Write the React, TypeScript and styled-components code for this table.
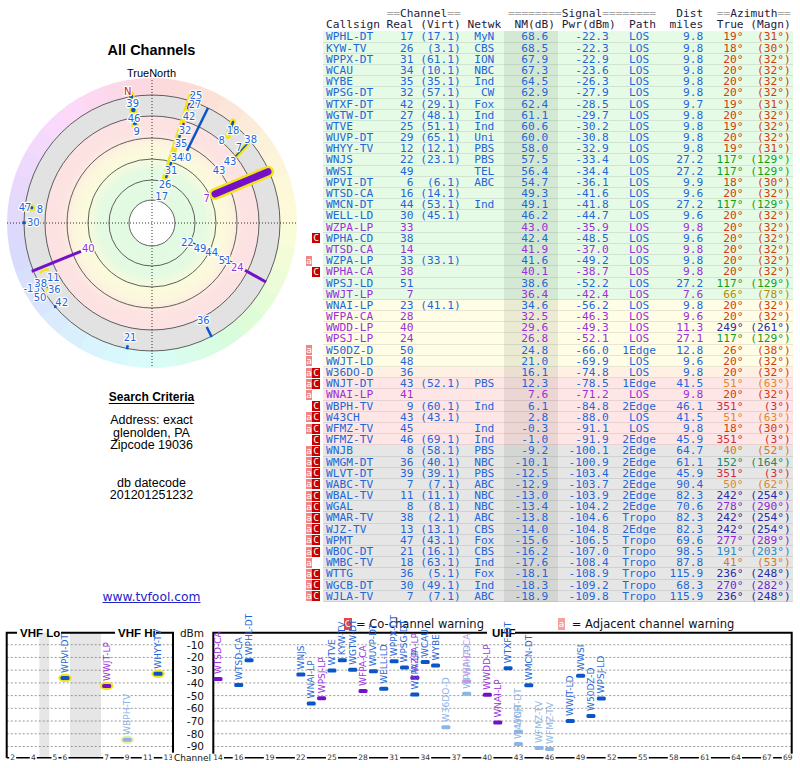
import styled, { createGlobalStyle } from "styled-components";

const GlobalStyle = createGlobalStyle`
  html, body {
    margin: 0;
    padding: 0;
    background: #fff;
  }
  body {
    font-family: "Liberation Sans", Arial, sans-serif;
    color: #000;
  }
`;

const Page = styled.div`
  width: 800px;
  height: 768px;
  overflow: hidden;
`;

const Top = styled.div`
  display: flex;
  height: 610px;
`;

/* ---------- left column ---------- */

const Side = styled.aside`
  width: 303px;
  height: 610px;
  box-sizing: border-box;
  padding-bottom: 5px;
  display: flex;
  flex-direction: column;
  align-items: center;
`;

const Title = styled.h1`
  margin: 41px 0 0;
  font-size: 14.5px;
  line-height: 18px;
  font-weight: bold;
`;

const North = styled.div`
  margin-top: 8px;
  font-size: 11px;
  line-height: 12px;
`;

const Polar = styled.svg`
  display: block;
  flex: none;
  margin-top: -3px;
`;

const CriteriaHead = styled.h2`
  margin: 20px 0 0;
  font-size: 12px;
  line-height: 14px;
  font-weight: bold;
  text-decoration: underline;
  text-decoration-thickness: 1px;
  text-underline-offset: 2px;
`;

const Info = styled.p<{ $gap: number }>`
  margin: ${(p) => p.$gap}px 0 0;
  font-size: 12.5px;
  line-height: 12.5px;
  text-align: center;
`;

const Site = styled.a`
  margin-top: auto;
  font-family: "DejaVu Sans", Verdana, sans-serif;
  font-size: 12.3px;
  line-height: 15px;
  color: #2323c8;
  text-decoration: underline;
`;

const PolarNum = styled.text<{ $c?: string }>`
  font-family: "DejaVu Sans", sans-serif;
  font-size: 10px;
  fill: ${(p) => p.$c ?? "#1f66d8"};
  stroke: #fff;
  stroke-width: 2.4px;
  paint-order: stroke;
  stroke-linejoin: round;
  text-anchor: middle;
  dominant-baseline: central;
`;

/* ---------- report table ---------- */

const Report = styled.section`
  width: 497px;
  padding-top: 8px;
  font-family: "DejaVu Sans Mono", "Liberation Mono", monospace;
  font-size: 11.2px;
  line-height: 11.2px;
`;

const HeadLine = styled.div`
  height: 11.2px;
  padding-left: 23px;
  white-space: pre;
  color: #1c1c3c;
`;

const Rule = styled.span`
  color: #a8a8a8;
`;

const Body = styled.div`
  margin-top: 1px;
`;

const RowWrap = styled.div`
  display: flex;
  height: 11.2px;
`;

const Flags = styled.div`
  width: 20px;
  box-sizing: border-box;
  padding-left: 3px;
  display: flex;
  align-items: center;
`;

const FlagBox = styled.span<{ $kind: "a" | "C" | "" }>`
  width: ${(p) => (p.$kind === "C" ? 8 : 6)}px;
  height: 10px;
  background: ${(p) => (p.$kind === "a" ? "#f08686" : p.$kind === "C" ? "#c80000" : "transparent")};
  color: #fff;
  font-size: 9.5px;
  line-height: 10px;
  text-align: center;
  overflow: hidden;
`;

type Band = "g" | "y" | "o" | "p" | "k";

const bandBg: Record<Band, string> = {
  g: "#e6fbe6",
  y: "#fffde6",
  o: "#fff0e4",
  p: "#ffe6e6",
  k: "#e6e6e6",
};

const Line = styled.div<{ $band: Band; $lp: boolean }>`
  width: 470px;
  box-sizing: border-box;
  padding-left: 3px;
  display: grid;
  grid-template-columns: 9ch 4ch 7ch 6.5ch 8ch 7.5ch 7ch 7ch 6ch 7ch;
  background: ${(p) => bandBg[p.$band]};
  box-shadow: inset 0 -1px 0 rgba(0, 0, 0, 0.09);
  color: ${(p) => (p.$lp ? "#9a30d8" : "#1f66d8")};
  white-space: pre;
`;

const Cell = styled.span<{ $right?: boolean }>`
  text-align: ${(p) => (p.$right ? "right" : "left")};
  overflow: visible;
`;

const NetCell = styled(Cell)`
  padding-right: 1.5ch;
`;

const NmCell = styled(Cell)`
  padding-right: 1.5ch;
  background: rgba(0, 30, 0, 0.08);
`;

const Az = styled.span<{ $c: string }>`
  text-align: right;
  color: ${(p) => p.$c};
`;

/* ---------- spectrum chart ---------- */

const Plot = styled.svg`
  display: block;
`;

const GridLine = styled.line`
  stroke: #808080;
  stroke-width: 0.8;
  stroke-dasharray: 2 2;
`;

const Frame = styled.path`
  fill: none;
  stroke: #000;
  stroke-width: 2;
`;

const PanelTitle = styled.text`
  font-family: "Liberation Sans", Arial, sans-serif;
  font-weight: bold;
  font-size: 11.5px;
  dominant-baseline: central;
`;

const AxisText = styled.text`
  font-family: "DejaVu Sans", sans-serif;
  font-size: 10.5px;
  fill: #111;
  text-anchor: end;
  dominant-baseline: central;
`;

const TickText = styled.text`
  font-family: "DejaVu Sans", sans-serif;
  font-size: 7.5px;
  fill: #333;
  text-anchor: middle;
  dominant-baseline: central;
`;

const LegendText = styled.text`
  font-family: "DejaVu Sans", sans-serif;
  font-size: 11.5px;
  fill: #111;
  dominant-baseline: central;
`;

const StationLabel = styled.text<{ $c: string }>`
  font-family: "DejaVu Sans", sans-serif;
  font-size: 9px;
  fill: ${(p) => p.$c};
  dominant-baseline: central;
`;

/* ---------- data ---------- */

type Row = [string, string, string, string, string, string, string, string, string, number, number, Band, number?];

const rows: Row[] = [
  ["", "WPHL-DT", "17", "(17.1)", "MyN", "68.6", "-22.3", "LOS", "9.8", 19, 31, "g"],
  ["", "KYW-TV", "26", "(3.1)", "CBS", "68.5", "-22.3", "LOS", "9.8", 18, 30, "g"],
  ["", "WPPX-DT", "31", "(61.1)", "ION", "67.9", "-22.9", "LOS", "9.8", 20, 32, "g"],
  ["", "WCAU", "34", "(10.1)", "NBC", "67.3", "-23.6", "LOS", "9.8", 20, 32, "g"],
  ["", "WYBE", "35", "(35.1)", "Ind", "64.5", "-26.3", "LOS", "9.8", 20, 32, "g"],
  ["", "WPSG-DT", "32", "(57.1)", "CW", "62.9", "-27.9", "LOS", "9.8", 20, 32, "g"],
  ["", "WTXF-DT", "42", "(29.1)", "Fox", "62.4", "-28.5", "LOS", "9.7", 19, 31, "g"],
  ["", "WGTW-DT", "27", "(48.1)", "Ind", "61.1", "-29.7", "LOS", "9.8", 20, 32, "g"],
  ["", "WTVE", "25", "(51.1)", "Ind", "60.6", "-30.2", "LOS", "9.8", 19, 32, "g"],
  ["", "WUVP-DT", "29", "(65.1)", "Uni", "60.0", "-30.8", "LOS", "9.8", 20, 32, "g"],
  ["", "WHYY-TV", "12", "(12.1)", "PBS", "58.0", "-32.9", "LOS", "9.8", 19, 31, "g"],
  ["", "WNJS", "22", "(23.1)", "PBS", "57.5", "-33.4", "LOS", "27.2", 117, 129, "g"],
  ["", "WWSI", "49", "", "TEL", "56.4", "-34.4", "LOS", "27.2", 117, 129, "g"],
  ["", "WPVI-DT", "6", "(6.1)", "ABC", "54.7", "-36.1", "LOS", "9.9", 18, 30, "g"],
  ["", "WTSD-CA", "16", "(14.1)", "", "49.3", "-41.6", "LOS", "9.6", 20, 32, "g"],
  ["", "WMCN-DT", "44", "(53.1)", "Ind", "49.1", "-41.8", "LOS", "27.2", 117, 129, "g"],
  ["", "WELL-LD", "30", "(45.1)", "", "46.2", "-44.7", "LOS", "9.6", 20, 32, "g"],
  ["", "WZPA-LP", "33", "", "", "43.0", "-35.9", "LOS", "9.8", 20, 32, "g", 1],
  ["C", "WPHA-CD", "38", "", "", "42.4", "-48.5", "LOS", "9.6", 20, 32, "g"],
  ["", "WTSD-CA", "14", "", "", "41.9", "-37.0", "LOS", "9.8", 20, 32, "g", 1],
  ["a", "WZPA-LP", "33", "(33.1)", "", "41.6", "-49.2", "LOS", "9.8", 20, 32, "g"],
  ["C", "WPHA-CA", "38", "", "", "40.1", "-38.7", "LOS", "9.8", 20, 32, "g", 1],
  ["", "WPSJ-LD", "51", "", "", "38.6", "-52.2", "LOS", "27.2", 117, 129, "g"],
  ["", "WWJT-LP", "7", "", "", "36.4", "-42.4", "LOS", "7.6", 66, 78, "g", 1],
  ["", "WNAI-LP", "23", "(41.1)", "", "34.6", "-56.2", "LOS", "9.8", 20, 32, "y"],
  ["", "WFPA-CA", "28", "", "", "32.5", "-46.3", "LOS", "9.6", 20, 32, "y", 1],
  ["", "WWDD-LP", "40", "", "", "29.6", "-49.3", "LOS", "11.3", 249, 261, "y", 1],
  ["", "WPSJ-LP", "24", "", "", "26.8", "-52.1", "LOS", "27.1", 117, 129, "y", 1],
  ["a", "W50DZ-D", "50", "", "", "24.8", "-66.0", "1Edge", "12.8", 26, 38, "y"],
  ["a", "WWJT-LD", "48", "", "", "21.0", "-69.9", "LOS", "9.6", 20, 32, "y"],
  ["aC", "W36DO-D", "36", "", "", "16.1", "-74.8", "LOS", "9.8", 20, 32, "o"],
  ["aC", "WNJT-DT", "43", "(52.1)", "PBS", "12.3", "-78.5", "1Edge", "41.5", 51, 63, "p"],
  ["a", "WNAI-LP", "41", "", "", "7.6", "-71.2", "LOS", "9.8", 20, 32, "p", 1],
  ["C", "WBPH-TV", "9", "(60.1)", "Ind", "6.1", "-84.8", "2Edge", "46.1", 351, 3, "p"],
  ["aC", "W43CH", "43", "(43.1)", "", "2.8", "-88.0", "LOS", "41.5", 51, 63, "p"],
  ["aC", "WFMZ-TV", "45", "", "Ind", "-0.3", "-91.1", "LOS", "9.8", 18, 30, "p"],
  ["C", "WFMZ-TV", "46", "(69.1)", "Ind", "-1.0", "-91.9", "2Edge", "45.9", 351, 3, "p"],
  ["aC", "WNJB", "8", "(58.1)", "PBS", "-9.2", "-100.1", "2Edge", "64.7", 40, 52, "k"],
  ["aC", "WMGM-DT", "36", "(40.1)", "NBC", "-10.1", "-100.9", "2Edge", "61.1", 152, 164, "k"],
  ["aC", "WLVT-DT", "39", "(39.1)", "PBS", "-12.5", "-103.4", "2Edge", "45.9", 351, 3, "k"],
  ["aC", "WABC-TV", "7", "(7.1)", "ABC", "-12.9", "-103.7", "2Edge", "90.4", 50, 62, "k"],
  ["aC", "WBAL-TV", "11", "(11.1)", "NBC", "-13.0", "-103.9", "2Edge", "82.3", 242, 254, "k"],
  ["aC", "WGAL", "8", "(8.1)", "NBC", "-13.4", "-104.2", "2Edge", "70.6", 278, 290, "k"],
  ["aC", "WMAR-TV", "38", "(2.1)", "ABC", "-13.8", "-104.6", "Tropo", "82.3", 242, 254, "k"],
  ["aC", "WJZ-TV", "13", "(13.1)", "CBS", "-14.0", "-104.8", "2Edge", "82.3", 242, 254, "k"],
  ["aC", "WPMT", "47", "(43.1)", "Fox", "-15.6", "-106.5", "Tropo", "69.6", 277, 289, "k"],
  ["aC", "WBOC-DT", "21", "(16.1)", "CBS", "-16.2", "-107.0", "Tropo", "98.5", 191, 203, "k"],
  ["a", "WMBC-TV", "18", "(63.1)", "Ind", "-17.6", "-108.4", "Tropo", "87.8", 41, 53, "k"],
  ["aC", "WTTG", "36", "(5.1)", "Fox", "-18.1", "-108.9", "Tropo", "115.9", 236, 248, "k"],
  ["aC", "WGCB-DT", "30", "(49.1)", "Ind", "-18.3", "-109.2", "Tropo", "68.3", 270, 282, "k"],
  ["aC", "WJLA-TV", "7", "(7.1)", "ABC", "-18.9", "-109.8", "Tropo", "115.9", 236, 248, "k"],
];

const azColors: Record<number, string> = {
  18: "#d23c0c", 19: "#d23c0c", 20: "#d23c0c", 26: "#d2460c",
  117: "#14a014", 66: "#b48c00", 249: "#2a2aa8", 51: "#dc8a2c",
  351: "#d22c3c", 40: "#d47a24", 152: "#1e8a5a", 50: "#dc8a2c",
  242: "#2a2aa8", 278: "#8a2ad2", 277: "#8a2ad2", 191: "#2a8ac4",
  41: "#d47a24", 236: "#2a2aa8", 270: "#6a2ad2",
};

type Kind = "b" | "p" | "fb" | "fp";
type Mark = [string, number, number, Kind, ("y" | "py")?];

const marks: Mark[] = [
  ["WPVI-DT", 6, -36.1, "b", "y"],
  ["WWJT-LP", 7, -42.4, "p", "y"],
  ["WBPH-TV", 9, -84.8, "fb", "py"],
  ["WHYY-TV", 12, -32.9, "b", "y"],
  ["WTSD-CA", 14, -37.0, "p"],
  ["WTSD-CA", 16, -41.6, "b"],
  ["WPHL-DT", 17, -22.3, "b"],
  ["WNJS", 22, -33.4, "b"],
  ["WNAI-LP", 23, -56.2, "b"],
  ["WPSJ-LP", 24, -52.1, "p"],
  ["WTVE", 25, -30.2, "b"],
  ["KYW-TV", 26, -22.3, "b"],
  ["WGTW-DT", 27, -29.7, "b"],
  ["WFPA-CA", 28, -46.3, "p"],
  ["WUVP-DT", 29, -30.8, "b"],
  ["WELL-LD", 30, -44.7, "b"],
  ["WPPX-DT", 31, -22.9, "b"],
  ["WPSG-DT", 32, -27.9, "b"],
  ["WZPA-LP", 33, -35.9, "p"],
  ["WZPA-LP", 33, -49.2, "b"],
  ["WCAU", 34, -23.6, "b"],
  ["WYBE", 35, -26.3, "b"],
  ["W36DO-D", 36, -74.8, "fb"],
  ["WPHA-CD", 38, -48.5, "fb"],
  ["WPHA-CA", 38, -38.7, "fp"],
  ["WWDD-LP", 40, -49.3, "p"],
  ["WNAI-LP", 41, -71.2, "p"],
  ["WTXF-DT", 42, -28.5, "b"],
  ["WNJT-DT", 43, -78.5, "fb"],
  ["W43CH", 43, -88.0, "fb"],
  ["WMCN-DT", 44, -41.8, "b"],
  ["WFMZ-TV", 45, -91.1, "fb"],
  ["WFMZ-TV", 46, -91.9, "fb"],
  ["WWJT-LD", 48, -69.9, "b"],
  ["WWSI", 49, -34.4, "b"],
  ["W50DZ-D", 50, -66.0, "b"],
  ["WPSJ-LD", 51, -52.2, "b"],
];

const markFill: Record<Kind, string> = { b: "#0b55c8", p: "#7410c8", fb: "#8cb4e4", fp: "#c49ae4" };
const labelFill: Record<Kind, string> = { b: "#1f66d8", p: "#9a30d8", fb: "#8cb4e4", fp: "#c49ae4" };

const chX = (ch: number) => {
  if (ch <= 4) return 12.7 + (ch - 2) * 10.3;
  if (ch <= 6) return 55 + (ch - 5) * 10;
  if (ch <= 13) return 106.7 + (ch - 7) * 10.27;
  return 218 + (ch - 14) * 10.36;
};
const dbY = (d: number) => 22 - d * 1.272;

/* ---------- polar helpers ---------- */

const CX = 152;
const CY = 147;

const pt = (r: number, a: number) => {
  const t = (a * Math.PI) / 180;
  return `${(CX + r * Math.sin(t)).toFixed(2)} ${(CY - r * Math.cos(t)).toFixed(2)}`;
};

const wedge = (a0: number, a1: number, r0: number, r1: number) =>
  `M${pt(r1, a0)} A${r1} ${r1} 0 0 1 ${pt(r1, a1)} L${pt(r0, a1)} A${r0} ${r0} 0 0 0 ${pt(r0, a0)} Z`;

const hueStops = [
  [0, -8], [30, 18], [60, 45], [90, 60], [135, 110], [180, 175],
  [225, 210], [270, 250], [315, 295], [360, 352],
];

const ringHue = (az: number) => {
  for (let i = 1; i < hueStops.length; i++) {
    const [a0, h0] = hueStops[i - 1];
    const [a1, h1] = hueStops[i];
    if (az <= a1) return (((h0 + ((az - a0) / (a1 - a0)) * (h1 - h0)) % 360) + 360) % 360;
  }
  return 0;
};

function PolarChart() {
  const sectors = Array.from({ length: 36 }, (_, i) => i * 10);
  const circles = [23, 43, 64, 85, 107, 128];
  return (
    <Polar width={304} height={294} viewBox="0 0 304 294">
      <defs>
        <radialGradient id="bands" gradientUnits="userSpaceOnUse" cx={CX} cy={CY} r={128}>
          <stop offset="0" stopColor="#fff" />
          <stop offset="0.18" stopColor="#fff" />
          <stop offset="0.18" stopColor="#e2fae2" />
          <stop offset="0.42" stopColor="#e6fae2" />
          <stop offset="0.52" stopColor="#fbfbdc" />
          <stop offset="0.62" stopColor="#fcf5de" />
          <stop offset="0.7" stopColor="#fce4e2" />
          <stop offset="0.835" stopColor="#fce2e2" />
          <stop offset="0.835" stopColor="#e2e2e2" />
          <stop offset="1" stopColor="#e2e2e2" />
        </radialGradient>
      </defs>
      {sectors.map((a) => (
        <path key={a} d={wedge(a, a + 10.3, 128, 145)} fill={`hsl(${ringHue(a + 5)}, 85%, 92%)`} />
      ))}
      <circle cx={CX} cy={CY} r={128} fill="url(#bands)" />
      {circles.map((r) => (
        <circle key={r} cx={CX} cy={CY} r={r} fill="none" stroke="#3a3a3a" strokeWidth={0.8} />
      ))}
      <line x1={7} x2={297} y1={CY} y2={CY} stroke="#000" strokeWidth={0.8} strokeDasharray="1 2" />
      <line x1={CX} x2={CX} y1={4} y2={292} stroke="#000" strokeWidth={0.8} strokeDasharray="1 2" />

      {/* north cluster */}
      <line x1={131} y1={19} x2={135} y2={49} stroke="#f2e41c" strokeWidth={7} strokeLinecap="round" />
      <circle cx={131} cy={20.7} r={2.3} fill="#0b55c8" />
      <circle cx={133.3} cy={34} r={2.3} fill="#0b55c8" />
      <circle cx={135} cy={47} r={2.3} fill="#0b55c8" />
      <PolarNum x={127.7} y={15.5} $c="#d01818">N</PolarNum>
      <PolarNum x={132.7} y={27}>39</PolarNum>
      <PolarNum x={134} y={42}>46</PolarNum>
      <PolarNum x={136.7} y={55.7}>9</PolarNum>

      {/* main bearing */}
      <line x1={192} y1={17.3} x2={165} y2={102} stroke="#f2e41c" strokeWidth={6} strokeLinecap="round" />
      {[[192, 19, "#0b55c8"], [189.5, 28, "#7410c8"], [186.5, 38, "#0b55c8"], [183.5, 48, "#7410c8"], [180.5, 57, "#0b55c8"], [177.5, 67, "#7410c8"], [174.5, 77, "#0b55c8"], [171, 87, "#0b55c8"], [167.5, 97, "#0b55c8"]].map(([x, y, c], i) => (
        <line key={i} x1={x as number} y1={y as number} x2={(x as number) - 1.2} y2={(y as number) + 4} stroke={c as string} strokeWidth={2.5} strokeLinecap="round" />
      ))}
      <line x1={208} y1={32} x2={187} y2={74.7} stroke="#0b55c8" strokeWidth={2.5} />
      <PolarNum x={196} y={19}>25</PolarNum>
      <PolarNum x={195} y={28}>27</PolarNum>
      <PolarNum x={189} y={40}>42</PolarNum>
      <PolarNum x={185} y={54}>32</PolarNum>
      <PolarNum x={181} y={67}>35</PolarNum>
      <PolarNum x={185} y={81.7}>40</PolarNum>
      <PolarNum x={177} y={81}>34</PolarNum>
      <PolarNum x={171} y={94}>31</PolarNum>
      <PolarNum x={165} y={108}>26</PolarNum>
      <PolarNum x={161.7} y={120.7}>17</PolarNum>

      {/* north east */}
      <line x1={233} y1={45.7} x2={228} y2={60} stroke="#f2e41c" strokeWidth={6} strokeLinecap="round" />
      <line x1={233} y1={46} x2={229} y2={58} stroke="#0b55c8" strokeWidth={2.5} strokeLinecap="round" />
      <PolarNum x={233} y={54}>18</PolarNum>
      <PolarNum x={221.7} y={64}>8</PolarNum>
      <line x1={248} y1={67} x2={237} y2={79} stroke="#f2e41c" strokeWidth={5} strokeLinecap="round" />
      <line x1={248} y1={67} x2={233} y2={83} stroke="#0b55c8" strokeWidth={1.5} />
      <PolarNum x={250.7} y={63.3}>38</PolarNum>
      <PolarNum x={239} y={71}>7</PolarNum>
      <PolarNum x={230} y={85}>43</PolarNum>
      <PolarNum x={219} y={94}>43</PolarNum>
      <line x1={215} y1={118} x2={268} y2={95.7} stroke="#f2e41c" strokeWidth={12} strokeLinecap="round" />
      <line x1={215} y1={118} x2={268} y2={95.7} stroke="#7410c8" strokeWidth={7} strokeLinecap="round" />
      <PolarNum x={206.7} y={122} $c="#9a30d8">7</PolarNum>

      {/* west */}
      <circle cx={31.7} cy={131.7} r={3.5} fill="#f2e41c" />
      <circle cx={31.7} cy={131.7} r={1.6} fill="#0b55c8" />
      <PolarNum x={25} y={131.7}>47</PolarNum>
      <PolarNum x={40} y={133.3}>8</PolarNum>
      <rect x={22.5} y={145.2} width={3} height={3} fill="#0b55c8" />
      <PolarNum x={33.3} y={146.7}>30</PolarNum>
      <line x1={31.7} y1={195.3} x2={81} y2={175.3} stroke="#7410c8" strokeWidth={3} />
      <PolarNum x={88.3} y={172} $c="#9a30d8">40</PolarNum>

      {/* south west */}
      <path d="M40 197 Q44 192 49 194" fill="none" stroke="#f2e41c" strokeWidth={2.5} />
      <path d="M44 206 Q50 210 47 216" fill="none" stroke="#f2e41c" strokeWidth={2.5} />
      <line x1={46} y1={208} x2={47} y2={212} stroke="#0b55c8" strokeWidth={1.5} />
      <PolarNum x={53.3} y={201}>11</PolarNum>
      <PolarNum x={31.7} y={212.7}>-13</PolarNum>
      <PolarNum x={40.7} y={207.7}>38</PolarNum>
      <PolarNum x={54.3} y={213.3}>36</PolarNum>
      <PolarNum x={40} y={221}>50</PolarNum>
      <line x1={55} y1={229} x2={55.5} y2={232} stroke="#0b55c8" strokeWidth={2.5} />
      <PolarNum x={61.7} y={226}>42</PolarNum>

      {/* south */}
      <line x1={127.7} y1={269.3} x2={127} y2={273.3} stroke="#0b55c8" strokeWidth={2.5} />
      <PolarNum x={130} y={261}>21</PolarNum>
      <line x1={206.7} y1={251} x2={211.7} y2={261} stroke="#0b55c8" strokeWidth={2.5} />
      <PolarNum x={203.3} y={244.3}>36</PolarNum>

      {/* south east */}
      <line x1={193} y1={167} x2={236} y2={188} stroke="#22336a" strokeWidth={1.2} />
      <line x1={245} y1={194.3} x2={266} y2={206} stroke="#7410c8" strokeWidth={3} />
      <PolarNum x={187.3} y={166}>22</PolarNum>
      <PolarNum x={200} y={172}>49</PolarNum>
      <PolarNum x={211.7} y={176.7}>44</PolarNum>
      <PolarNum x={225} y={184.7}>51</PolarNum>
      <PolarNum x={237.3} y={191} $c="#9a30d8">24</PolarNum>
    </Polar>
  );
}

/* ---------- spectrum ---------- */

const VX0 = 6.7;
const VX1 = 173;
const UX0 = 213.3;
const UX1 = 791.7;
const PY0 = 22.7;
const PY1 = 147.7;

function Spectrum() {
  const levels = [10, 20, 30, 40, 50, 60, 70, 80, 90];
  const vTicks = [2, 4, 5, 6, 7, 9, 11, 13];
  const uTicks = [14, 16, 19, 22, 25, 28, 31, 34, 37, 40, 43, 46, 49, 52, 55, 58, 61, 64, 67, 69];
  const tick = (ch: number) => {
    const x = chX(ch);
    const w = String(ch).length * 5 + 2;
    return (
      <g key={ch}>
        <rect x={x - w / 2} y={PY1 - 4} width={w} height={8} fill="#fff" />
        <TickText x={x} y={PY1}>{ch}</TickText>
      </g>
    );
  };
  return (
    <Plot width={800} height={158} viewBox="0 0 800 158">
      <rect x={39.3} y={PY0} width={10} height={PY1 - PY0} fill="#e6e6e6" />
      <rect x={70} y={PY0} width={31} height={PY1 - PY0} fill="#e6e6e6" />
      {levels.map((d) => (
        <g key={d}>
          <GridLine x1={VX0} x2={VX1} y1={dbY(-d)} y2={dbY(-d)} />
          <GridLine x1={UX0} x2={UX1} y1={dbY(-d)} y2={dbY(-d)} />
          <AxisText x={204} y={dbY(-d)}>-{d}</AxisText>
        </g>
      ))}
      <AxisText x={204} y={PY0}>dBm</AxisText>
      <Frame d={`M${VX0} ${PY1} V${PY0} H17 M61 ${PY0} H115 M156 ${PY0} H${VX1} V${PY1}`} />
      <Frame d={`M${UX0} ${PY1} V${PY0} H487 M515 ${PY0} H${UX1} V${PY1}`} />
      <PanelTitle x={20} y={PY0}>VHF Lo</PanelTitle>
      <PanelTitle x={118} y={PY0}>VHF Hi</PanelTitle>
      <PanelTitle x={492} y={PY0}>UHF</PanelTitle>
      <line x1={VX0} x2={VX1} y1={PY1} y2={PY1} stroke="#000" strokeWidth={1.5} />
      <line x1={UX0} x2={UX1} y1={PY1} y2={PY1} stroke="#000" strokeWidth={1.5} />
      {vTicks.map(tick)}
      {uTicks.map(tick)}
      <rect x={172} y={PY1 - 5} width={40} height={10} fill="#fff" />
      <AxisText x={211} y={PY1} style={{ fontSize: "9px" }}>Channel</AxisText>

      <rect x={344} y={8} width={8} height={12} fill="#e04848" />
      <TickText x={348} y={14} style={{ fill: "#fff", fontSize: "9px" }}>C</TickText>
      <LegendText x={356} y={14}>= Co-channel warning</LegendText>
      <rect x={558} y={8} width={7} height={12} fill="#f4a0a0" />
      <TickText x={561.5} y={14} style={{ fill: "#fff", fontSize: "9px" }}>a</TickText>
      <LegendText x={571.7} y={14}>= Adjacent channel warning</LegendText>

      {marks.map(([, ch, d, k, h], i) => {
        const x = chX(ch);
        const y = dbY(d);
        return (
          <g key={i}>
            {h && <ellipse cx={x} cy={y} rx={6.8} ry={4.2} fill={h === "y" ? "#f2e41c" : "#f2eca8"} />}
            <rect x={x - 4.5} y={y - 2} width={9} height={4} rx={1.5} fill={markFill[k]} />
          </g>
        );
      })}
      {marks.map(([name, ch, d, k], i) => (
        <StationLabel key={i} $c={labelFill[k]} transform={`translate(${chX(ch)} ${dbY(d) - 5}) rotate(-90)`}>
          {name}
        </StationLabel>
      ))}
    </Plot>
  );
}

/* ---------- page ---------- */

const head1 = [
  ["", "         "], ["r", "=="], ["", "Channel"], ["r", "=="], ["", "       "],
  ["r", "========"], ["", "Signal"], ["r", "========"], ["", "   Dist  "],
  ["r", "=="], ["", "Azimuth"], ["r", "=="],
];

export default function App() {
  return (
    <Page>
      <GlobalStyle />
      <Top>
        <Side>
          <Title>All Channels</Title>
          <North>TrueNorth</North>
          <PolarChart />
          <CriteriaHead>Search Criteria</CriteriaHead>
          <Info $gap={10}>
            Address: exact
            <br />
            glenolden, PA
            <br />
            Zipcode 19036
          </Info>
          <Info $gap={25}>
            db datecode
            <br />
            201201251232
          </Info>
          <Site href="#">www.tvfool.com</Site>
        </Side>
        <Report>
          <HeadLine>
            {head1.map(([k, t], i) => (k === "r" ? <Rule key={i}>{t}</Rule> : <span key={i}>{t}</span>))}
          </HeadLine>
          <HeadLine>Callsign Real (Virt) Netwk  NM(dB) Pwr(dBm)  Path  miles  True (Magn)</HeadLine>
          <Body>
            {rows.map((r, i) => {
              const [flags, call, real, virt, net, nm, pwr, path, dist, tru, magn, band, lp] = r;
              const c = azColors[tru] ?? "#d23c0c";
              return (
                <RowWrap key={i}>
                  <Flags>
                    {flags && <FlagBox $kind={flags.includes("a") ? "a" : ""}>{flags.includes("a") ? "a" : ""}</FlagBox>}
                    {flags.includes("C") && <FlagBox $kind="C">C</FlagBox>}
                  </Flags>
                  <Line $band={band} $lp={!!lp}>
                    <Cell>{call}</Cell>
                    <Cell $right>{real}</Cell>
                    <Cell $right>{virt}</Cell>
                    <NetCell $right>{net}</NetCell>
                    <NmCell $right>{nm}</NmCell>
                    <Cell $right>{pwr}</Cell>
                    <Cell>{(path.length === 3 ? "   " : "  ") + path}</Cell>
                    <Cell $right>{dist}</Cell>
                    <Az $c={c}>{tru}°</Az>
                    <Az $c={c}>({magn}°)</Az>
                  </Line>
                </RowWrap>
              );
            })}
          </Body>
        </Report>
      </Top>
      <Spectrum />
    </Page>
  );
}
